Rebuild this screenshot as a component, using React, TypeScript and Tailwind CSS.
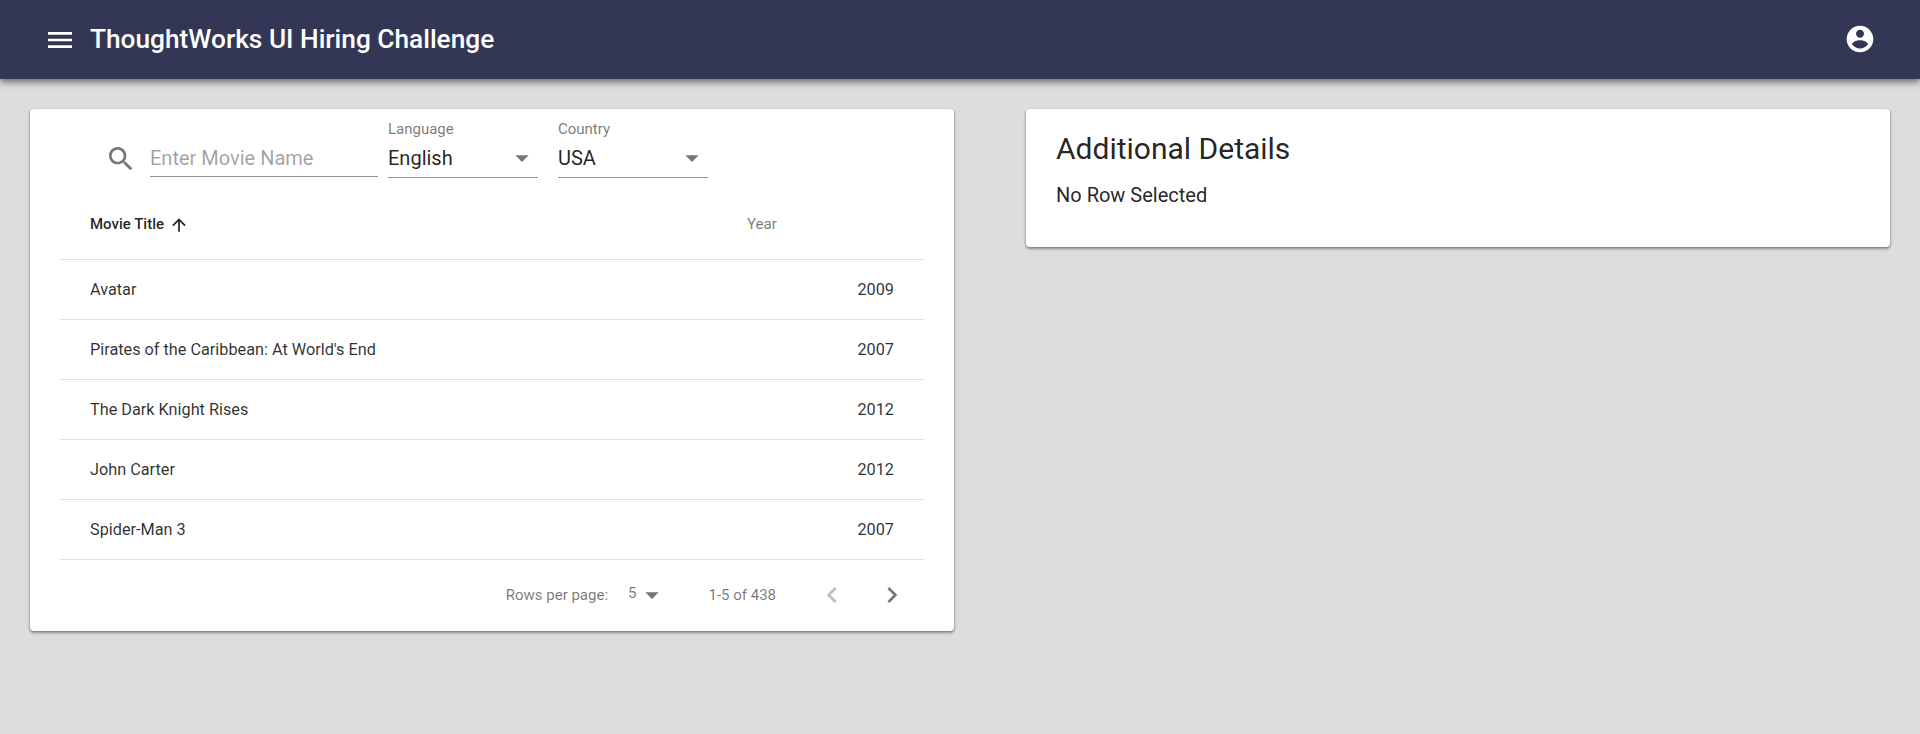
const FONT = "font-['Roboto',sans-serif]";

function Icon({ d, className }: { d: string; className?: string }) {
  return (
    <svg viewBox="0 0 24 24" fill="currentColor" className={className}>
      <path d={d} />
    </svg>
  );
}

const icons = {
  menu: "M3 18h18v-2H3v2zm0-5h18v-2H3v2zm0-7v2h18V6H3z",
  account:
    "M12 2C6.48 2 2 6.48 2 12s4.48 10 10 10 10-4.48 10-10S17.52 2 12 2zm0 3c1.66 0 3 1.34 3 3s-1.34 3-3 3-3-1.34-3-3 1.34-3 3-3zm0 14.2c-2.5 0-4.71-1.28-6-3.22.03-1.99 4-3.08 6-3.08 1.99 0 5.97 1.09 6 3.08-1.29 1.94-3.5 3.22-6 3.22z",
  search:
    "M15.5 14h-.79l-.28-.27C15.41 12.59 16 11.11 16 9.5 16 5.91 13.09 3 9.5 3S3 5.91 3 9.5 5.91 16 9.5 16c1.61 0 3.09-.59 4.23-1.57l.27.28v.79l5 4.99L20.49 19l-4.99-5zm-6 0C7.01 14 5 11.99 5 9.5S7.01 5 9.5 5 14 7.01 14 9.5 11.99 14 9.5 14z",
  arrowUp: "M4 12l1.41 1.41L11 7.83V20h2V7.83l5.58 5.59L20 12l-8-8-8 8z",
  dropdown: "M7 10l5 5 5-5z",
  left: "M15.41 7.41L14 6l-6 6 6 6 1.41-1.41L10.83 12z",
  right: "M10 6L8.59 7.41 13.17 12l-4.58 4.59L10 18l6-6z",
};

const movies = [
  { title: "Avatar", year: 2009 },
  { title: "Pirates of the Caribbean: At World's End", year: 2007 },
  { title: "The Dark Knight Rises", year: 2012 },
  { title: "John Carter", year: 2012 },
  { title: "Spider-Man 3", year: 2007 },
];

function SelectField({ label, value }: { label: string; value: string }) {
  return (
    <div className="w-[150px]">
      <div className="h-[20px] text-[15px] leading-[20px] text-[#0000008a]">{label}</div>
      <div className="flex h-[39px] items-center justify-between border-b border-[#0000006b] pb-[1px]">
        <span className="text-[20px] text-[#000000de]">{value}</span>
        <Icon d={icons.dropdown} className="h-[32px] w-[32px] text-[#0000008a]" />
      </div>
    </div>
  );
}

export default function App() {
  return (
    <div className={`${FONT} min-h-[734px] bg-[#dddddd]`}>
      <header className="flex h-[79px] items-center justify-between bg-[#333755] px-[44px] text-white shadow-[0_3px_5px_rgba(0,0,0,0.35),0_5px_8px_rgba(0,0,0,0.16)]">
        <div className="flex items-center gap-[14px]">
          <Icon d={icons.menu} className="h-[32px] w-[32px]" />
          <h1 className="text-[26.25px] font-medium">ThoughtWorks UI Hiring Challenge</h1>
        </div>
        <Icon d={icons.account} className="-mt-[1px] h-[32px] w-[32px]" />
      </header>

      <main className="flex items-start justify-between px-[30px] pt-[30px]">
        <section className="w-[924px] rounded-[4px] bg-white px-[30px] shadow-[0_1px_3px_rgba(0,0,0,0.3),0_2px_3px_rgba(0,0,0,0.25)]">
          <div className="flex h-[80px] items-start pl-[45px] pt-[10px]">
            <Icon d={icons.search} className="mt-[24px] h-[32px] w-[32px] text-[#0000008a]" />
            <div className="ml-[13px] mt-[20px] flex h-[38px] w-[228px] items-center border-b border-[#0000006b] text-[20px] text-[#00000061]">
              Enter Movie Name
            </div>
            <div className="ml-[10px] flex gap-[20px]">
              <SelectField label="Language" value="English" />
              <SelectField label="Country" value="USA" />
            </div>
          </div>

          <div className="flex h-[71px] items-center justify-between border-b border-[#e0e0e0] px-[30px] pt-[1px] text-[15px]">
            <div className="flex items-center gap-[5px] font-medium text-[#000000de]">
              Movie Title
              <Icon d={icons.arrowUp} className="h-[20px] w-[20px]" />
            </div>
            <div className="w-[147px] text-[#0000008a]">Year</div>
          </div>

          {movies.map((movie) => (
            <div
              key={movie.title}
              className="flex h-[60px] items-center justify-between border-b border-[#e0e0e0] px-[30px] pt-[1px] text-[16.25px] text-[#000000d0]"
            >
              <span>{movie.title}</span>
              <span>{movie.year}</span>
            </div>
          ))}

          <div className="flex h-[71px] items-center justify-end pb-[1px] pr-[16px] text-[15px] text-[#0000008a]">
            <span>Rows per page:</span>
            <span className="ml-[20px] -translate-y-[2px]">5</span>
            <Icon d={icons.dropdown} className="h-[32px] w-[32px]" />
            <span className="ml-[40px]">1-5 of 438</span>
            <Icon d={icons.left} className="ml-[40px] h-[32px] w-[32px] text-[#00000042]" />
            <Icon d={icons.right} className="ml-[28px] h-[32px] w-[32px]" />
          </div>
        </section>

        <section className="h-[138px] w-[864px] rounded-[4px] bg-white px-[30px] pt-[22px] text-[#000000de] shadow-[0_1px_3px_rgba(0,0,0,0.3),0_2px_3px_rgba(0,0,0,0.25)]">
          <h2 className="text-[30px] leading-[36px]">Additional Details</h2>
          <p className="mt-[13px] text-[20px]">No Row Selected</p>
        </section>
      </main>
    </div>
  );
}
